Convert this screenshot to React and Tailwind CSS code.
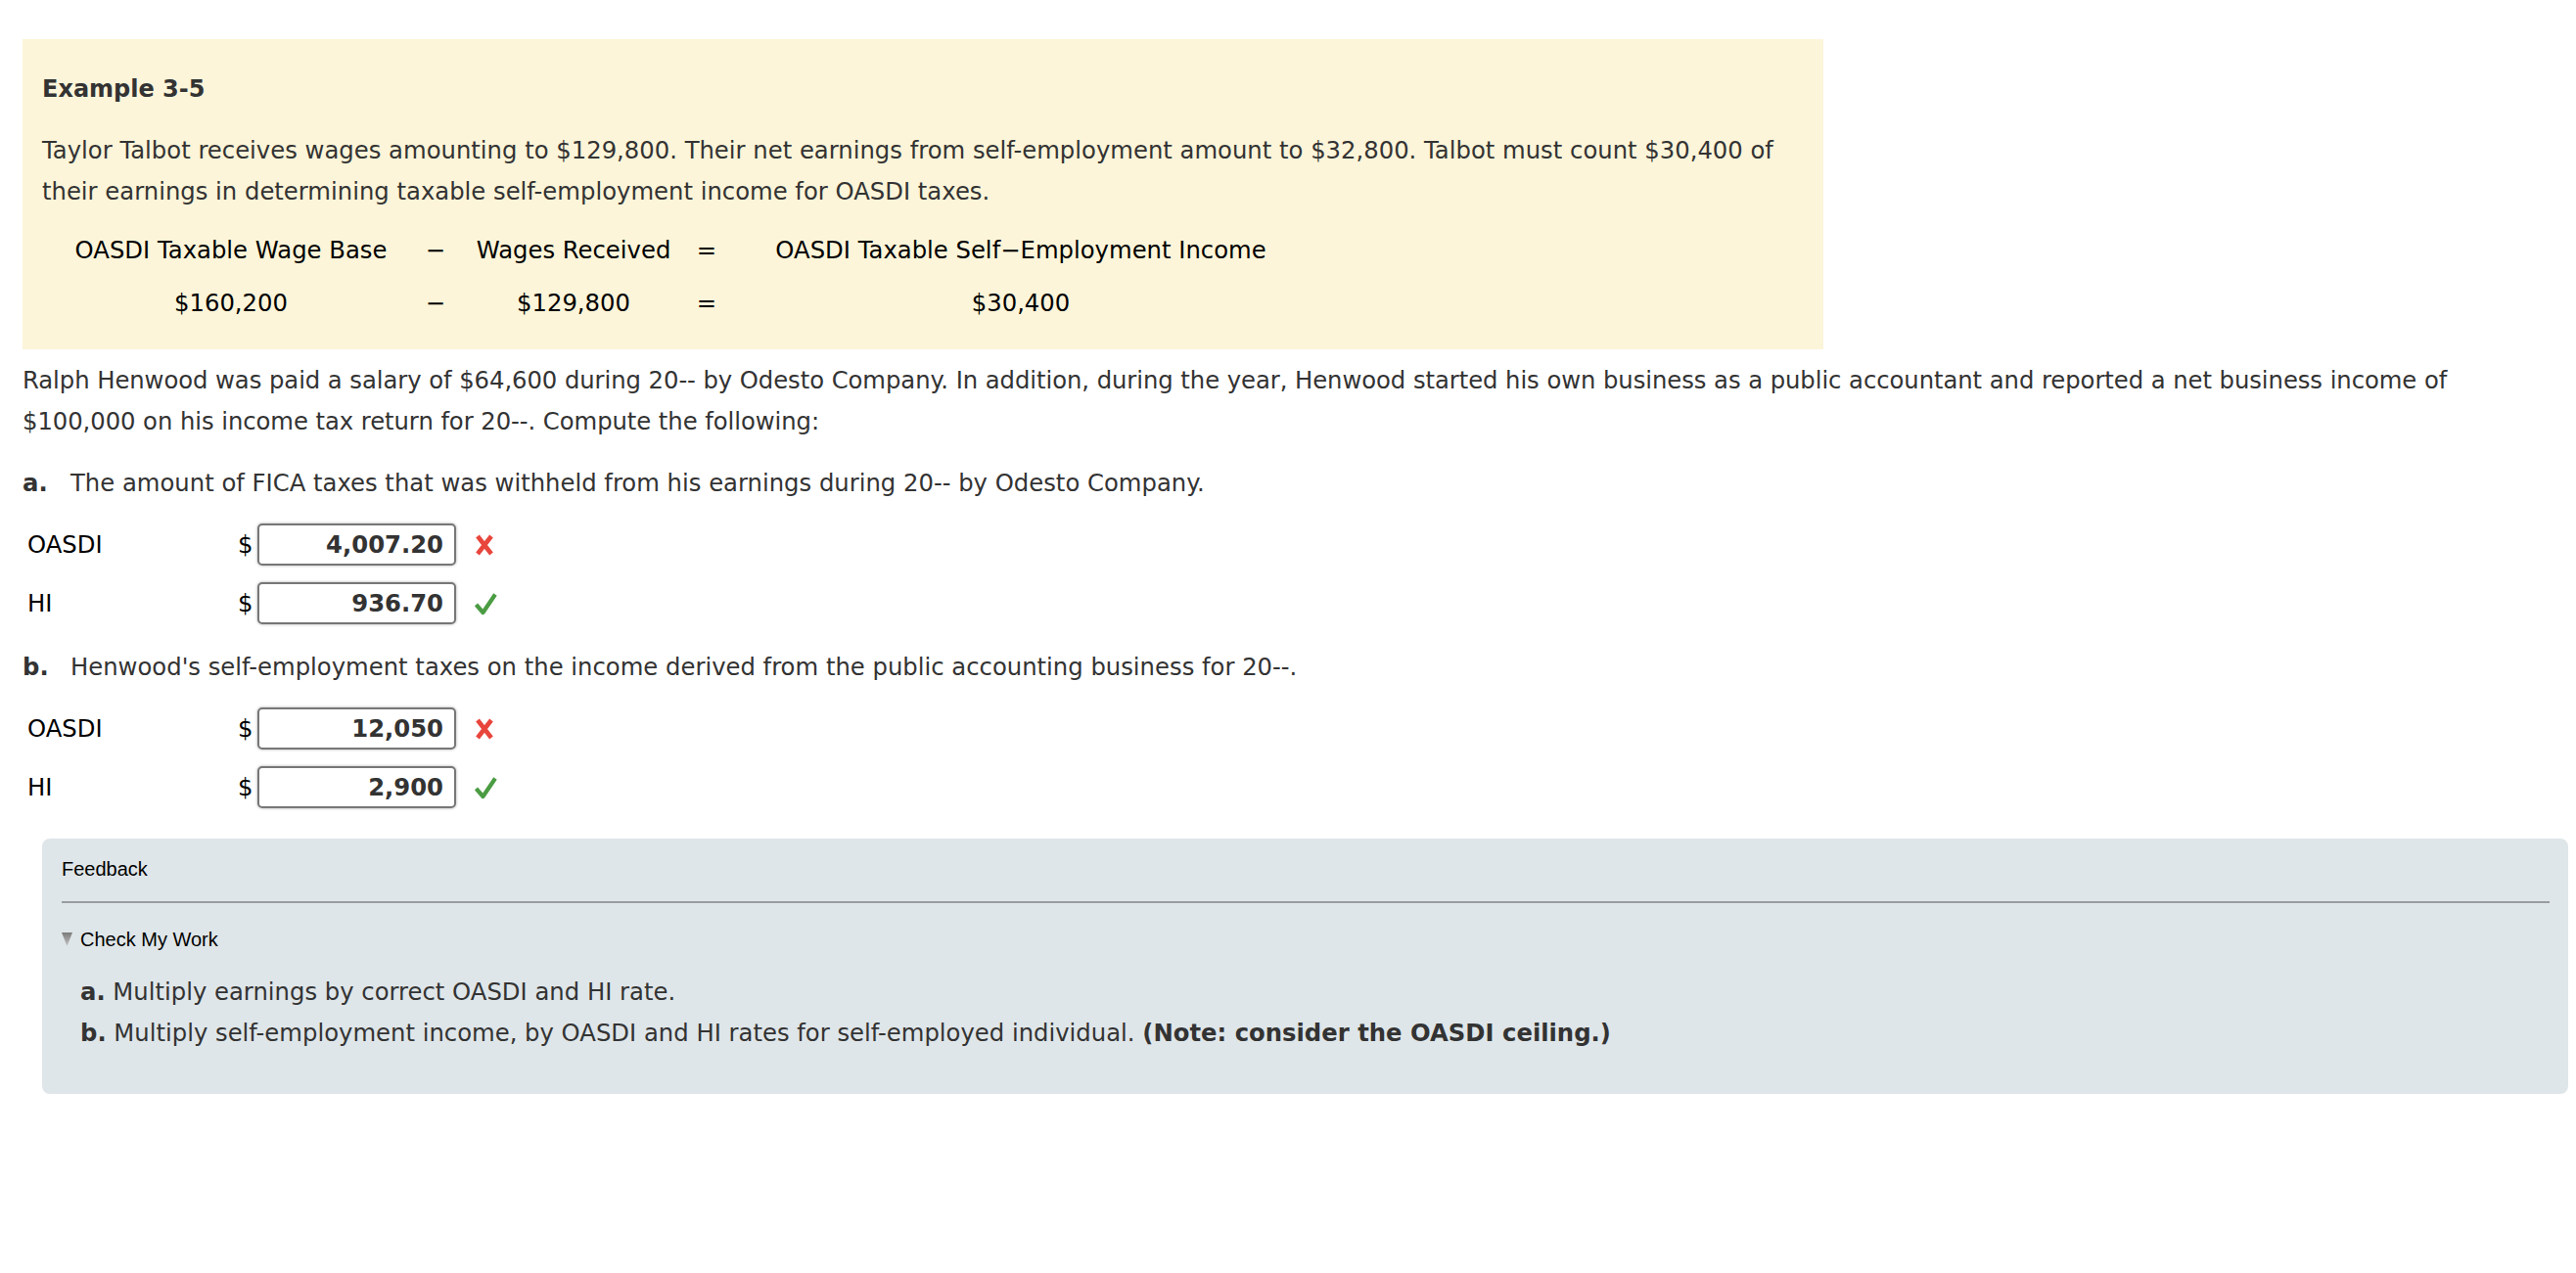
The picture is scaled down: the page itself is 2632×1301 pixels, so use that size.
import React from 'react';

const rowsA = [
  { label: 'OASDI', value: '4,007.20', ok: false },
  { label: 'HI', value: '936.70', ok: true },
];

const rowsB = [
  { label: 'OASDI', value: '12,050', ok: false },
  { label: 'HI', value: '2,900', ok: true },
];

const CrossMark = () => (
  <svg width="20" height="22" viewBox="0 0 20 22" className="block">
    <path d="M3 2 L17 20 M17 2 L3 20" stroke="#e8453c" strokeWidth="4.6" strokeLinecap="butt" fill="none" />
  </svg>
);

const CheckMark = () => (
  <svg width="23" height="24" viewBox="0 0 23 24" className="block">
    <path d="M1.5 13 L8.5 21 L21 2.5" stroke="#4b9c43" strokeWidth="4.2" strokeLinejoin="round" fill="none" />
  </svg>
);

const AnswerRow = ({ label, value, ok }) => (
  <div className="flex items-center h-[43px]">
    <div className="w-[220px] pl-[5px] text-black">{label}</div>
    <div className="w-[20px] text-black">$</div>
    <div className="w-[203px] h-[43px] border-2 border-[#777777] rounded-[5px] bg-white shadow-[0_0_3px_rgba(0,0,0,0.35)] flex items-center justify-end pr-[11px] font-bold text-[#333333]">
      {value}
    </div>
    <div className="ml-[19px]">{ok ? <CheckMark /> : <CrossMark />}</div>
  </div>
);

const Triangle = () => (
  <svg width="11" height="14" viewBox="0 0 11 14" className="block">
    <defs>
      <linearGradient id="tri" x1="0" y1="0" x2="0" y2="1">
        <stop offset="0" stopColor="#7a7a7a" />
        <stop offset="1" stopColor="#c4c4c4" />
      </linearGradient>
    </defs>
    <polygon points="0,0 11,0 5.5,14" fill="url(#tri)" />
  </svg>
);

export default function App() {
  return (
    <div className="min-h-screen bg-white font-['DejaVu_Sans',Verdana,sans-serif] text-[24.3px] leading-[42px] text-[#333333]">
      <div className="pt-[40px] pl-[23px]">
        <div className="w-[1840px] bg-[#fcf5d9] pt-[30px] pb-[20px] pl-[20px] pr-[20px]">
          <div className="font-bold text-[24px]">Example 3-5</div>
          <p className="mt-[21px]">
            Taylor Talbot receives wages amounting to $129,800. Their net earnings from self-employment amount to $32,800. Talbot must count $30,400 of their earnings in determining taxable self-employment income for OASDI taxes.
          </p>
          <div className="mt-[12px] text-black">
            <div className="flex h-[54px] items-center text-center">
              <div className="w-[386px]">OASDI Taxable Wage Base</div>
              <div className="w-[32px]">−</div>
              <div className="w-[250px]">Wages Received</div>
              <div className="w-[22px]">=</div>
              <div className="w-[620px]">OASDI Taxable Self−Employment Income</div>
            </div>
            <div className="flex h-[54px] items-center text-center">
              <div className="w-[386px]">$160,200</div>
              <div className="w-[32px]">−</div>
              <div className="w-[250px]">$129,800</div>
              <div className="w-[22px]">=</div>
              <div className="w-[620px]">$30,400</div>
            </div>
          </div>
        </div>

        <p className="mt-[11px] w-[2520px] tracking-[-0.06px]">
          Ralph Henwood was paid a salary of $64,600 during 20-- by Odesto Company. In addition, during the year, Henwood started his own business as a public accountant and reported a net business income of $100,000 on his income tax return for 20--. Compute the following:
        </p>

        <div className="mt-[21px] flex">
          <span className="w-[49px] font-bold">a.</span>
          <span>The amount of FICA taxes that was withheld from his earnings during 20-- by Odesto Company.</span>
        </div>
        <div className="mt-[20px] flex flex-col gap-[17px]">
          {rowsA.map((r) => (
            <AnswerRow key={'a' + r.label} {...r} />
          ))}
        </div>

        <div className="mt-[23px] flex">
          <span className="w-[49px] font-bold">b.</span>
          <span>Henwood's self-employment taxes on the income derived from the public accounting business for 20--.</span>
        </div>
        <div className="mt-[20px] flex flex-col gap-[17px]">
          {rowsB.map((r) => (
            <AnswerRow key={'b' + r.label} {...r} />
          ))}
        </div>
      </div>

      <div className="mt-[31px] ml-[43px] mr-[8px] rounded-[8px] bg-[#dfe6e9] pt-[17px] pb-[41px] pl-[20px] pr-[19px]">
        <div className="font-['Liberation_Sans',Arial,sans-serif] text-[20px] leading-[28px] text-black">Feedback</div>
        <div className="mt-[19px] h-[2px] bg-[#999ca0]" />
        <div className="mt-[23px] flex items-center gap-[8px] font-['Liberation_Sans',Arial,sans-serif] text-[20px] leading-[28px] text-black">
          <Triangle />
          <span>Check My Work</span>
        </div>
        <div className="mt-[19px] pl-[19px]">
          <p>
            <span className="font-bold">a.</span> Multiply earnings by correct OASDI and HI rate.
          </p>
          <p>
            <span className="font-bold">b.</span> Multiply self-employment income, by OASDI and HI rates for self-employed individual.{' '}
            <span className="font-bold">(Note: consider the OASDI ceiling.)</span>
          </p>
        </div>
      </div>
    </div>
  );
}
